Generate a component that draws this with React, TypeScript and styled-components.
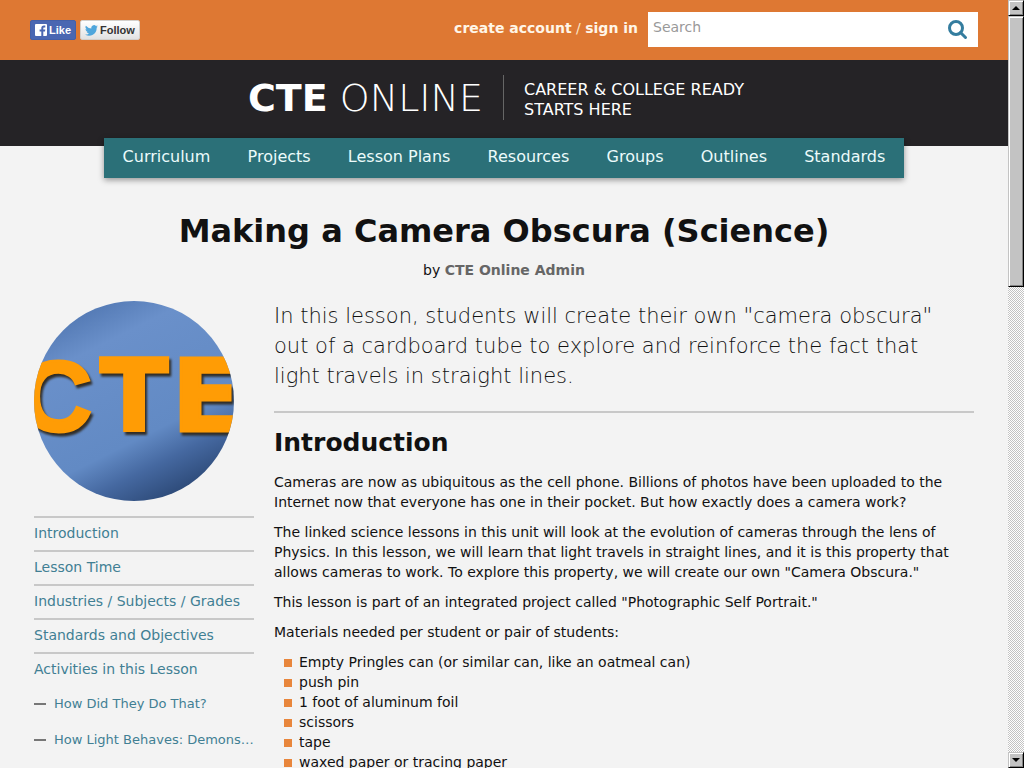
import React from "react";
import styled, { createGlobalStyle } from "styled-components";

const GlobalStyle = createGlobalStyle`
  * { box-sizing: border-box; }
  body {
    margin: 0;
    background: #f3f3f3;
    color: #111;
    font: 14px/20px "DejaVu Sans", sans-serif;
  }
  a { text-decoration: none; }
`;

const Shell = styled.div`
  display: grid;
  grid-template-columns: minmax(0, 1fr) 16px;
  height: 100vh;
  overflow: hidden;
`;

const Page = styled.div`
  overflow: hidden;
`;

const TopBar = styled.div`
  display: flex;
  align-items: center;
  min-height: 60px;
  padding: 0 30px 2px;
  background: #de7833;
`;

const Social = styled.div`
  display: flex;
  gap: 4px;
  margin-right: auto;
  padding-top: 2px;
`;

const SocialButton = styled.button<{ $dark?: boolean }>`
  display: flex;
  align-items: center;
  gap: 2px;
  height: 20px;
  padding: 0 4px;
  border: 1px solid ${(p) => (p.$dark ? "#4460a8" : "#d3cfcb")};
  border-radius: 2px;
  background: ${(p) => (p.$dark ? "#4a67b2" : "linear-gradient(#fff, #e2e2e2)")};
  color: ${(p) => (p.$dark ? "#fff" : "#333")};
  font: bold 11px/18px "Liberation Sans", sans-serif;
`;

const Account = styled.div`
  margin: 0 10px;
  padding-bottom: 2px;
  color: #fbe6c8;
`;

const AccountLink = styled.a`
  color: #fff6e8;
  font-weight: bold;
`;

const SearchForm = styled.form`
  display: flex;
  width: 330px;
  height: 35px;
  background: #fff;
`;

const SearchInput = styled.input`
  flex: 1;
  min-width: 0;
  padding: 0 5px 4px;
  border: 0;
  background: none;
  font: inherit;
  &::placeholder { color: #999; opacity: 1; }
`;

const SearchButton = styled.button`
  display: flex;
  align-items: center;
  padding: 0 10px;
  border: 0;
  background: none;
`;

const Banner = styled.header`
  display: flex;
  justify-content: center;
  height: 86px;
  padding: 15px 16px 0 0;
  background: #252326;
  color: #fff;
`;

const Logo = styled.a`
  height: 45px;
  padding-right: 20px;
  border-right: 1px solid #666;
  color: #fff;
  font-size: 38px;
  line-height: 46px;
  font-weight: 200;
`;

const LogoStrong = styled.strong`
  font-weight: bold;
`;

const Tagline = styled.div`
  width: 240px;
  padding: 5px 0 0 20px;
  font-size: 16px;
`;

const Nav = styled.nav`
  position: relative;
  display: flex;
  justify-content: space-around;
  max-width: 800px;
  height: 40px;
  margin: -8px auto 0;
  background: #2b7078;
  box-shadow: 0 2px 6px rgba(0, 0, 0, 0.4);
`;

const NavLink = styled.a`
  color: #ecfbfb;
  font-size: 16px;
  line-height: 38px;
`;

const TitleBlock = styled.div`
  padding: 33px 34px 0;
  text-align: center;
`;

const Title = styled.h1`
  margin: 0;
  font-size: 32px;
  line-height: 40px;
`;

const Byline = styled.p`
  margin: 9px 0 0;
`;

const AuthorLink = styled.a`
  color: #666;
  font-weight: bold;
`;

const Columns = styled.div`
  display: grid;
  grid-template-columns: 220px minmax(0, 1fr);
  gap: 20px;
  padding: 21px 34px 0;
`;

const Picture = styled.svg`
  display: block;
  width: 200px;
  height: 200px;
  margin-bottom: 15px;
  border-radius: 50%;
`;

const PictureLetters = styled.text`
  fill: #ff9c05;
  stroke: #ff9c05;
  font-family: "DejaVu Sans", sans-serif;
  font-size: 100px;
  font-weight: bold;
  filter: drop-shadow(2px 3px 1px #302d28);
`;

const List = styled.ul`
  margin: 0;
  padding: 0;
  list-style: none;
`;

const TocItem = styled.li`
  padding: 5px 0 7px;
  border-top: 2px solid #c8c8c8;
`;

const TocLink = styled.a`
  color: #417f93;
`;

const SubItem = styled.li`
  display: flex;
  gap: 8px;
  padding: 8px 0;
  font-size: 13px;
`;

const Dash = styled.span`
  flex: none;
  width: 12px;
  height: 2px;
  margin-top: 9px;
  background: #777;
`;

const SubLink = styled(TocLink)`
  overflow: hidden;
  text-overflow: ellipsis;
  white-space: nowrap;
`;

const Article = styled.main`
  min-width: 0;
`;

const Lead = styled.p`
  margin: 0;
  padding: 0 10px 20px 0;
  border-bottom: 2px solid #c8c8c8;
  font-size: 21px;
  line-height: 30px;
  font-weight: 200;
`;

const Heading = styled.h2`
  margin: 15px 0 14px;
  font-size: 25px;
  line-height: 30px;
`;

const Text = styled.p`
  margin: 0 0 10px;
`;

const Material = styled.li`
  display: flex;
  align-items: center;
  gap: 7px;
  padding-left: 10px;
  white-space: nowrap;
  &::before {
    content: "";
    width: 8px;
    height: 8px;
    margin-top: 2px;
    background: #e8863c;
  }
`;

const ScrollTrack = styled.div`
  display: flex;
  flex-direction: column;
  background: repeating-conic-gradient(#fff 0 25%, #c3c3c3 0 50%) 0 0 / 2px 2px;
`;

const ScrollPart = styled.div<{ $thumb?: boolean }>`
  display: flex;
  align-items: center;
  justify-content: center;
  flex: none;
  height: ${(p) => (p.$thumb ? "271px" : "16px")};
  margin-bottom: ${(p) => (p.$thumb ? "auto" : "0")};
  border: 1px solid;
  border-color: #c3c3c3 #000 #000 #c3c3c3;
  background: #c3c3c3;
  box-shadow: inset 1px 1px #fff, inset -1px -1px #828282;
`;

const contents = [
  "Introduction",
  "Lesson Time",
  "Industries / Subjects / Grades",
  "Standards and Objectives",
  "Activities in this Lesson",
];

const activities = ["How Did They Do That?", "How Light Behaves: Demonstration"];

const materials = [
  "Empty Pringles can (or similar can, like an oatmeal can)",
  "push pin",
  "1 foot of aluminum foil",
  "scissors",
  "tape",
  "waxed paper or tracing paper",
];

const navigation = ["Curriculum", "Projects", "Lesson Plans", "Resources", "Groups", "Outlines", "Standards"];

function FacebookIcon() {
  return (
    <svg width="12" height="12" viewBox="0 0 12 12" aria-hidden="true">
      <rect width="12" height="12" rx="1" fill="#fff" />
      <path d="M6.3 12V7.4H4.6V5.5h1.7V4.2c0-1.7 1-2.6 2.6-2.6h1.4v1.8H9.2c-.7 0-.9.3-.9.9v1.2h2L10 7.4H8.3V12z" fill="#4a67b2" />
    </svg>
  );
}

function TwitterIcon() {
  return (
    <svg width="13" height="11" viewBox="0 0 24 20" aria-hidden="true">
      <path
        fill="#4fa6dc"
        d="M24 2.4a9.9 9.9 0 0 1-2.8.8A5 5 0 0 0 23.300 .5a9.900 9.900 0 0 1-3.100 1.200A4.900 4.900 0 0 0 11.800 6.200 14 14 0 0 1 1.700 1a4.900 4.900 0 0 0 1.500 6.600 4.900 4.900 0 0 1-2.200-.6c0 2.300 1.600 4.400 3.900 4.900a5 5 0 0 1-2.200.1 4.900 4.900 0 0 0 4.600 3.400A9.900 9.900 0 0 1 0 17.500 14 14 0 0 0 21.500 5z"
      />
    </svg>
  );
}

function LessonPicture() {
  return (
    <Picture viewBox="0 0 200 200" role="img" aria-label="CTE">
      <defs>
        <linearGradient id="sky" x1="0.15" y1="0" x2="0.65" y2="1">
          <stop offset="0" stopColor="#4a70ab" />
          <stop offset="0.25" stopColor="#6a90ca" />
          <stop offset="0.7" stopColor="#628ac4" />
          <stop offset="0.84" stopColor="#4568a0" />
          <stop offset="1" stopColor="#2d4a78" />
        </linearGradient>
      </defs>
      <rect width="200" height="200" fill="url(#sky)" />
      <PictureLetters y="130" strokeWidth="3">
        <tspan x="-14" fontFamily="Liberation Sans">C</tspan>
        <tspan x="66">T</tspan>
        <tspan x="138">E</tspan>
      </PictureLetters>
    </Picture>
  );
}

export default function App() {
  return (
    <Shell>
      <GlobalStyle />
      <Page>
        <TopBar>
          <Social>
            <SocialButton $dark><FacebookIcon />Like</SocialButton>
            <SocialButton><TwitterIcon />Follow</SocialButton>
          </Social>
          <Account>
            <AccountLink href="#create">create account</AccountLink> / <AccountLink href="#signin">sign in</AccountLink>
          </Account>
          <SearchForm role="search">
            <SearchInput type="text" placeholder="Search" aria-label="Search" />
            <SearchButton type="button" aria-label="Submit search">
              <svg width="21" height="21" viewBox="0 0 21 21" fill="none" stroke="#347d9f" strokeWidth="3" aria-hidden="true">
                <circle cx="9" cy="9" r="6.500" />
                <path d="M13.500 13.500l5 5" strokeLinecap="round" />
              </svg>
            </SearchButton>
          </SearchForm>
        </TopBar>
        <Banner>
          <Logo href="#home"><LogoStrong>CTE</LogoStrong> ONLINE</Logo>
          <Tagline>CAREER &amp; COLLEGE READY<br />STARTS HERE</Tagline>
        </Banner>
        <Nav>
          {navigation.map((label) => <NavLink key={label} href="#nav">{label}</NavLink>)}
        </Nav>
        <TitleBlock>
          <Title>Making a Camera Obscura (Science)</Title>
          <Byline>by <AuthorLink href="#author">CTE Online Admin</AuthorLink></Byline>
        </TitleBlock>
        <Columns>
          <aside>
            <LessonPicture />
            <List>
              {contents.map((label) => (
                <TocItem key={label}><TocLink href="#section">{label}</TocLink></TocItem>
              ))}
            </List>
            <List>
              {activities.map((label) => (
                <SubItem key={label}><Dash /><SubLink href="#activity">{label}</SubLink></SubItem>
              ))}
            </List>
          </aside>
          <Article>
            <Lead>
              In this lesson, students will create their own "camera obscura" out of a cardboard tube to
              explore and reinforce the fact that light travels in straight lines.
            </Lead>
            <Heading>Introduction</Heading>
            <Text>
              Cameras are now as ubiquitous as the cell phone. Billions of photos have been uploaded to the
              Internet now that everyone has one in their pocket. But how exactly does a camera work?
            </Text>
            <Text>
              The linked science lessons in this unit will look at the evolution of cameras through the lens of
              Physics. In this lesson, we will learn that light travels in straight lines, and it is this property that
              allows cameras to work. To explore this property, we will create our own "Camera Obscura."
            </Text>
            <Text>This lesson is part of an integrated project called "Photographic Self Portrait."</Text>
            <Text>Materials needed per student or pair of students:</Text>
            <List>
              {materials.map((label) => <Material key={label}>{label}</Material>)}
            </List>
          </Article>
        </Columns>
      </Page>
      <ScrollTrack aria-hidden="true">
        <ScrollPart><svg width="8" height="4" viewBox="0 0 8 4"><path d="M4 0l4 4H0z" /></svg></ScrollPart>
        <ScrollPart $thumb />
        <ScrollPart><svg width="8" height="4" viewBox="0 0 8 4"><path d="M0 0h8L4 4z" /></svg></ScrollPart>
      </ScrollTrack>
    </Shell>
  );
}
